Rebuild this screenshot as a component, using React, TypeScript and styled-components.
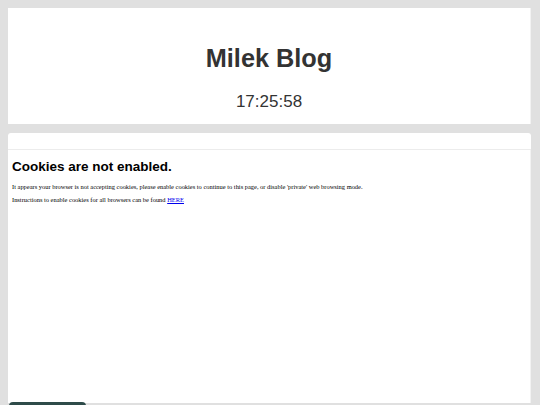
import styled, { createGlobalStyle } from "styled-components";

const GlobalStyle = createGlobalStyle`
  html, body {
    margin: 0;
    padding: 0;
    background-color: #e0e0e0;
    height: 405px;
    overflow: hidden;
  }
`;

const Page = styled.div`
  display: flex;
  flex-direction: column;
  padding: 8px 9px 0 8px;
  height: 395px;
`;

const Header = styled.header`
  background-color: #ffffff;
  height: 116px;
  box-sizing: border-box;
  padding-top: 36px;
  display: flex;
  flex-direction: column;
  align-items: center;
  border-right: 1px solid #f2f2f2;
  font-family: "Liberation Sans", Arial, sans-serif;
  color: #333333;
`;

const Title = styled.h1`
  margin: 0;
  font-size: 25.3px;
  line-height: 29px;
  font-weight: 700;
`;

const Clock = styled.div`
  margin-top: 18px;
  font-size: 17px;
  line-height: 21px;
`;

const NavBar = styled.div`
  margin-top: 9px;
  height: 16px;
  background-color: #ffffff;
  border-radius: 3px 3px 0 0;
  border-bottom: 1px solid #ececec;
`;

const Content = styled.main`
  flex: 1;
  background-color: #ffffff;
  padding: 9px 4px 0;
  border-right: 1px solid #f2f2f2;
`;

const Heading = styled.h2`
  margin: 0 0 6px;
  font-family: "Liberation Sans", Arial, sans-serif;
  font-size: 13.5px;
  line-height: 16px;
  font-weight: 700;
  color: #000000;
`;

const Text = styled.p`
  margin: 0;
  font-family: "Liberation Serif", "Times New Roman", serif;
  font-size: 6.45px;
  line-height: 12.5px;
  color: #000000;

  a {
    color: #0000ee;
    text-decoration: underline;
  }
`;

const FloatingTab = styled.div`
  position: fixed;
  left: 9px;
  top: 402px;
  width: 77px;
  height: 20px;
  background-color: #2e4b49;
  border-radius: 4px 4px 0 0;
`;

function App() {
  return (
    <>
      <GlobalStyle />
      <Page>
        <Header>
          <Title>Milek Blog</Title>
          <Clock>17:25:58</Clock>
        </Header>
        <NavBar />
        <Content>
          <Heading>Cookies are not enabled.</Heading>
          <Text>
            It appears your browser is not accepting cookies, please enable
            cookies to continue to this page, or disable 'private' web browsing
            mode.
          </Text>
          <Text>
            Instructions to enable cookies for all browsers can be found{" "}
            <a href="#">HERE</a>
          </Text>
        </Content>
      </Page>
      <FloatingTab />
    </>
  );
}

export default App;
